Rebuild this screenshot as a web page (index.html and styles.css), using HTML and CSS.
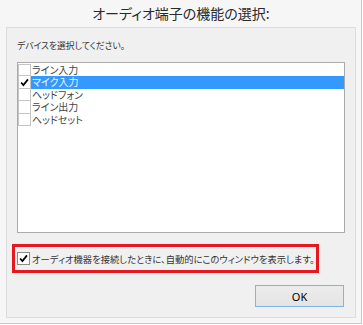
FILE: index.html
```html
<!DOCTYPE html>
<html lang="ja">
<head>
<meta charset="UTF-8">
<meta name="viewport" content="width=device-width, initial-scale=1.0">
<title>オーディオ端子の機能の選択</title>
<link rel="stylesheet" href="styles.css">
</head>
<body>

<div class="window">
    <h1 class="title">オーディオ端子の機能の選択:</h1>

    <div class="panel">
        <p class="prompt">デバイスを選択してください。</p>

        <div class="listbox">
            <div class="item">
                <span class="box"></span>
                <span class="label">ライン入力</span>
            </div>
            <div class="item selected">
                <span class="box">
                    <svg viewBox="0 0 13 13" width="13" height="13"><path d="M2.5 6.5 L5.2 9.6 L10.6 2.8" fill="none" stroke="#000" stroke-width="2"/></svg>
                </span>
                <span class="label">マイク入力</span>
            </div>
            <div class="item">
                <span class="box"></span>
                <span class="label">ヘッドフォン</span>
            </div>
            <div class="item">
                <span class="box"></span>
                <span class="label">ライン出力</span>
            </div>
            <div class="item">
                <span class="box"></span>
                <span class="label">ヘッドセット</span>
            </div>
        </div>

        <div class="notice">
            <label class="check-row">
                <span class="box checked">
                    <svg viewBox="0 0 13 13" width="13" height="13"><path d="M2.5 6.5 L5.2 9.6 L10.6 2.8" fill="none" stroke="#000" stroke-width="2"/></svg>
                </span>
                <span class="label">オーディオ機器を接続したときに、自動的にこのウィンドウを表示します。</span>
            </label>
        </div>

        <div class="actions">
            <button class="btn-ok">OK</button>
        </div>
    </div>
</div>

</body>
</html>
```

FILE: styles.css
```css
body {
    margin: 0;
    font-family: "Noto Sans CJK JP", "Noto Sans", sans-serif;
    font-feature-settings: "palt";
    background: #ffffff;
}
.window {
    width: 362px;
    height: 324px;
    box-sizing: border-box;
    padding: 0 5px 0 6px;
    background: #f6f6f6;
    border-right: 1px solid #c9c9c9;
    border-bottom: 1px solid #c9c9c9;
}
.title {
    margin: 0;
    height: 27px;
    line-height: 27px;
    font-size: 14px;
    font-weight: 400;
    color: #2a2a2a;
    text-align: center;
}
.panel {
    height: 291px;
    box-sizing: border-box;
    padding: 10px 10px 0 10px;
    background: #f0f0f0;
    border: 1px solid #dcdcdc;
}
.prompt {
    margin: 0 0 8px 0;
    height: 16px;
    line-height: 16px;
    font-size: 8.8px;
    color: #333;
}
.listbox {
    height: 171px;
    box-sizing: border-box;
    padding-top: 1px;
    background: #fff;
    border: 1px solid #ababab;
}
.item {
    display: flex;
    align-items: center;
    height: 12.4px;
    font-size: 10px;
    color: #444;
}
.item .box {
    width: 13px;
    height: 12.4px;
    box-sizing: border-box;
    border: 1px solid #c4c4c4;
    border-top-width: 0;
    display: flex;
    align-items: center;
    justify-content: center;
    flex: none;
}
.item:first-child .box {
    border-top-width: 1px;
}
.item .label {
    flex: 1;
    height: 100%;
    line-height: 12.4px;
    padding-left: 1px;
}
.item.selected .label {
    background: #3399ff;
    color: #eef5ff;
}
.notice {
    width: 307px;
    height: 29px;
    box-sizing: border-box;
    margin: 11px 0 0 -5px;
    padding-left: 2px;
    border: 3px solid #e5171f;
    display: flex;
    align-items: center;
}
.check-row {
    display: flex;
    align-items: center;
    gap: 2px;
    font-size: 9.3px;
    white-space: nowrap;
    color: #333;
}
.check-row .box {
    width: 13px;
    height: 13px;
    box-sizing: border-box;
    border: 1px solid #8c8c8c;
    background: #fff;
    display: flex;
    align-items: center;
    justify-content: center;
    flex: none;
}
.actions {
    display: flex;
    justify-content: flex-end;
    margin-top: 12px;
    padding-right: 1px;
}
.btn-ok {
    width: 89px;
    height: 22px;
    border: 1px solid #7eb4ea;
    background: linear-gradient(#ececec, #e4e4e4);
    font-family: "Noto Sans", sans-serif;
    font-size: 11px;
    color: #000;
    padding: 0;
}
```
